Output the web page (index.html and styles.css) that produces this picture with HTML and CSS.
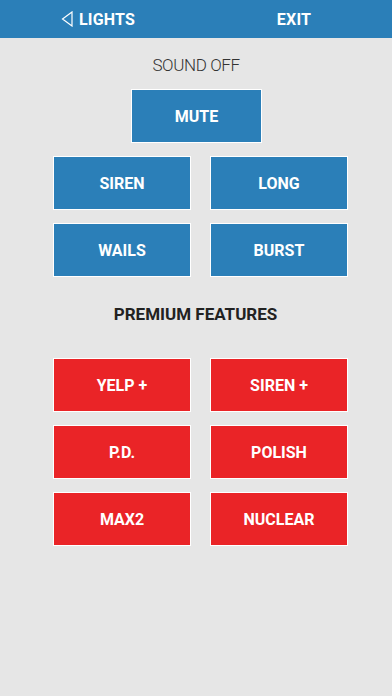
FILE: index.html
```html
<!DOCTYPE html>
<html lang="en">
<head>
<meta charset="UTF-8" />
<meta name="viewport" content="width=device-width, initial-scale=1" />
<title>Sounds</title>
<link rel="stylesheet" href="styles.css">
</head>
<body>

<header class="topbar">
  <div class="topbar-item">
    <svg class="back-icon" width="12" height="16" viewBox="0 0 12 16">
      <path d="M11 1 L1.5 8 L11 15 Z" fill="none" stroke="#fff" stroke-width="1.2" stroke-linejoin="miter" />
    </svg>
    <span>LIGHTS</span>
  </div>
  <div class="topbar-item">
    <span>EXIT</span>
  </div>
</header>

<main>
  <div class="section-title light">SOUND OFF</div>
  <button class="btn blue mute">MUTE</button>

  <div class="grid">
    <button class="btn blue">SIREN</button>
    <button class="btn blue">LONG</button>
    <button class="btn blue">WAILS</button>
    <button class="btn blue">BURST</button>
  </div>

  <div class="section-title premium">PREMIUM FEATURES</div>

  <div class="grid">
    <button class="btn red">YELP +</button>
    <button class="btn red">SIREN +</button>
    <button class="btn red">P.D.</button>
    <button class="btn red">POLISH</button>
    <button class="btn red">MAX2</button>
    <button class="btn red">NUCLEAR</button>
  </div>
</main>

</body>
</html>
```

FILE: styles.css
```css
body {
  margin: 0;
  background: #e6e6e6;
  font-family: Roboto, 'Liberation Sans', sans-serif;
  height: 696px;
  overflow: hidden;
}

.topbar {
  height: 38px;
  background: #2b7fb8;
  display: flex;
  align-items: center;
}
.topbar-item {
  flex: 1;
  display: flex;
  justify-content: center;
  align-items: center;
  color: #fff;
  font-weight: 700;
  font-size: 16px;
  letter-spacing: 0.2px;
}
.back-icon {
  margin-right: 6px;
  margin-top: -1px;
}

main {
  display: flex;
  flex-direction: column;
  align-items: center;
}

.section-title {
  color: #222;
  text-align: center;
}
.section-title.light {
  font-weight: 300;
  font-size: 17px;
  letter-spacing: -0.4px;
  color: #333;
  margin-top: 17px;
  height: 20px;
  line-height: 20px;
  margin-bottom: 14px;
}
.section-title.premium {
  font-weight: 700;
  font-size: 17px;
  margin-top: 27px;
  height: 20px;
  line-height: 20px;
  margin-bottom: 34px;
  margin-right: 1px;
}

.btn {
  border: 1px solid #fff;
  color: #fff;
  font-family: Roboto, 'Liberation Sans', sans-serif;
  font-weight: 700;
  font-size: 16px;
  height: 54px;
  padding: 0;
  cursor: pointer;
}
.btn.blue {
  background: #2b7fb8;
}
.btn.red {
  background: #ea2427;
}
.mute {
  width: 131px;
  margin-left: 1px;
  margin-bottom: 13px;
}

.grid {
  display: grid;
  grid-template-columns: 138px 138px;
  column-gap: 19px;
  row-gap: 13px;
  margin-left: 9px;
}
.grid .btn {
  width: 138px;
}
```
